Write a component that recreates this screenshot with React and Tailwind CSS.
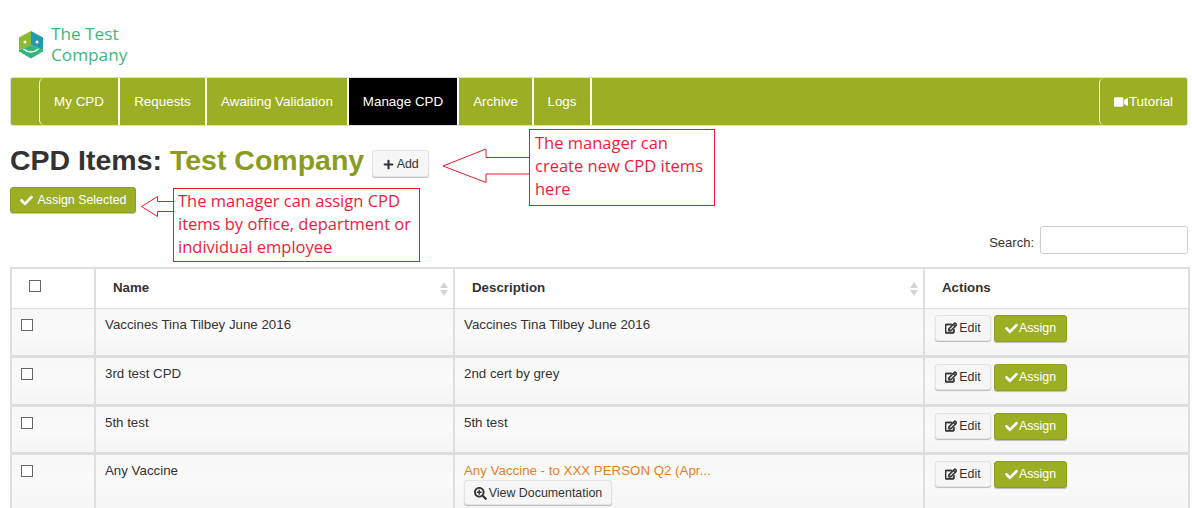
import React from "react";
import { FaCheck, FaPlus, FaRegEdit, FaSearchPlus, FaVideo } from "react-icons/fa";

const navItems = [
  { label: "My CPD", width: "w-[81px]", first: true },
  { label: "Requests", width: "w-[87px]" },
  { label: "Awaiting Validation", width: "w-[142px]" },
  { label: "Manage CPD", width: "w-[110px]", active: true },
  { label: "Archive", width: "w-[75px]" },
  { label: "Logs", width: "w-[58px]" },
];

const rows = [
  { name: "Vaccines Tina Tilbey June 2016", desc: "Vaccines Tina Tilbey June 2016", height: "h-[48px]" },
  { name: "3rd test CPD", desc: "2nd cert by grey", height: "h-[49px]" },
  { name: "5th test", desc: "5th test", height: "h-[48px]" },
  { name: "Any Vaccine", desc: "Any Vaccine - to XXX PERSON Q2 (Apr...", doc: true, height: "h-[60px]" },
];

function Logo() {
  return (
    <svg width="26" height="30" viewBox="0 0 26 30" className="shrink-0">
      <path d="M13 1 L1 7.5 V20 L13 15 Z" fill="#8dbb2e" />
      <path d="M13 1 L25 7.5 V20 L13 15 Z" fill="#2299ae" />
      <path d="M1 20 L13 15 L25 20 V21.5 L13 28.5 L1 21.5 Z" fill="#35b47b" />
      <circle cx="7" cy="12" r="1.5" fill="#fff" />
      <circle cx="19" cy="12" r="1.5" fill="#fff" />
      <path d="M5.5 19 Q13 25 20.5 19" fill="none" stroke="#fff" strokeWidth="1.6" />
    </svg>
  );
}

function SortArrows() {
  return (
    <svg width="8" height="14" viewBox="0 0 8 14" className="absolute right-[5px] top-[13px]">
      <path d="M4 0 L8 6 H0 Z" fill="#d4d4d4" />
      <path d="M4 14 L8 8 H0 Z" fill="#d4d4d4" />
    </svg>
  );
}

function Callout({ className, children }) {
  return (
    <div className={`absolute border border-[#e8192c] bg-white text-[#ed1c3c] text-[16.5px] leading-[23px] font-['Open_Sans',sans-serif] ${className}`}>
      {children}
    </div>
  );
}

function GreenButton({ children, className = "" }) {
  return (
    <button className={`flex items-center rounded-[3px] border border-[#8fa020] bg-[#9cae24] pt-[1px] text-white text-[12.4px] shadow-[0_1px_1px_rgba(0,0,0,0.25)] ${className}`}>
      {children}
    </button>
  );
}

function WhiteButton({ children, className = "" }) {
  return (
    <button className={`flex items-center rounded-[3px] border border-[#e3e3e3] bg-[#f6f6f6] pt-[1px] text-[#333] text-[12.4px] shadow-[0_1px_1px_rgba(0,0,0,0.25)] ${className}`}>
      {children}
    </button>
  );
}

export default function App() {
  return (
    <div className="relative h-[508px] w-[1192px] overflow-hidden bg-white font-['Liberation_Sans',sans-serif] text-[#333]">
      <div className="flex h-[77px] items-start gap-[7px] pl-[18px] pt-[23px]">
        <div className="pt-[7px]">
          <Logo />
        </div>
        <div className="font-['Open_Sans',sans-serif] text-[17.2px] font-medium leading-[21px] text-[#3fb67c]">
          <div>The Test</div>
          <div>Company</div>
        </div>
      </div>

      <nav className="ml-[10px] flex h-[49px] w-[1178px] rounded-[3px] border border-[#dddddd] bg-[#9cae24] text-[13.4px] text-white">
        <div className="w-[28px]" />
        {navItems.map((item) => (
          <div
            key={item.label}
            className={`flex items-center justify-center border-r-2 border-white pt-[1px] ${item.width} ${item.active ? "bg-black" : ""} ${item.first ? "rounded-l-[5px] border-l" : ""}`}
          >
            {item.label}
          </div>
        ))}
        <div className="ml-auto flex w-[88px] items-center justify-center gap-[1px] rounded-l-[5px] border-l border-white pt-[1px]">
          <FaVideo className="text-[14px]" />
          Tutorial
        </div>
      </nav>

      <div className="flex h-[60px] items-start pl-[10px] pt-[18px]">
        <h1 className="text-[28.5px] font-bold leading-[33px] text-[#333]">
          CPD Items: <span className="text-[#8a9c20]">Test Company</span>
        </h1>
        <WhiteButton className="ml-[8px] mt-[6px] h-[27px] w-[57px] justify-center gap-[3px]">
          <FaPlus className="text-[11px]" />
          Add
        </WhiteButton>
      </div>

      <GreenButton className="ml-[10px] mt-[1px] h-[26px] w-[126px] justify-center gap-[5px]">
        <FaCheck className="text-[13px]" />
        Assign Selected
      </GreenButton>

      <div className="mr-[4px] mt-[13px] flex h-[28px] items-center justify-end gap-[6px] text-[13px]">
        <span className="pt-[5px]">Search:</span>
        <input className="h-[28px] w-[148px] rounded-[3px] border border-[#ccc] bg-white" />
      </div>

      <table className="ml-[10px] mt-[13px] w-[1178px] table-fixed border-collapse text-[13.3px]">
        <colgroup>
          <col className="w-[84px]" />
          <col className="w-[359px]" />
          <col className="w-[470px]" />
          <col className="w-[265px]" />
        </colgroup>
        <thead>
          <tr className="h-[40px] text-left font-bold">
            <th className="border-2 border-b border-[#dedede] pb-[4px] pl-[17px]">
              <input type="checkbox" className="block h-[12px] w-[12px] appearance-none border border-[#666] bg-white" />
            </th>
            <th className="relative border-2 border-b border-[#dedede] pl-[17px]">
              Name
              <SortArrows />
            </th>
            <th className="relative border-2 border-b border-[#dedede] pl-[17px]">
              Description
              <SortArrows />
            </th>
            <th className="border-2 border-b border-[#dedede] pl-[17px]">Actions</th>
          </tr>
        </thead>
        <tbody>
          {rows.map((row) => (
            <tr key={row.name} className={`bg-gradient-to-b from-[#f7f7f7] via-[#fafafa] to-[#f5f5f5] ${row.height}`}>
              <td className="border-x-2 border-t border-b-[3px] border-[#dedede] pl-[9px] pt-[10px] align-top">
                <input type="checkbox" className="block h-[12px] w-[12px] appearance-none border border-[#666] bg-white" />
              </td>
              <td className="border-x-2 border-t border-b-[3px] border-[#dedede] pl-[9px] pt-[6px] align-top">{row.name}</td>
              <td className="border-x-2 border-t border-b-[3px] border-[#dedede] pl-[9px] pt-[6px] align-top">
                {row.doc ? (
                  <>
                    <div className="text-[#e67e22]">{row.desc}</div>
                    <WhiteButton className="h-[25px] w-[148px] justify-center gap-[2px]">
                      <FaSearchPlus className="text-[13px]" />
                      View Documentation
                    </WhiteButton>
                  </>
                ) : (
                  row.desc
                )}
              </td>
              <td className="border-x-2 border-t border-b-[3px] border-[#dedede] pl-[10px] pt-[6px] align-top">
                <div className="flex gap-[3px]">
                  <WhiteButton className="h-[26px] w-[56px] justify-center gap-[2px]">
                    <FaRegEdit className="stroke-current stroke-[40] text-[12px]" />
                    Edit
                  </WhiteButton>
                  <GreenButton className="h-[27px] w-[73px] justify-center gap-[1px]">
                    <FaCheck className="text-[13px]" />
                    Assign
                  </GreenButton>
                </div>
              </td>
            </tr>
          ))}
        </tbody>
      </table>

      <Callout className="left-[529px] top-[129px] h-[77px] w-[186px] pl-[5px] pt-[1px]">
        The manager can create new CPD items here
      </Callout>
      <svg width="90" height="36" viewBox="0 0 90 36" className="absolute left-[442px] top-[148px]">
        <path d="M87 9.5 H44 V1 L1 18 L44 34.5 V26 H87" fill="#fff" stroke="#e8192c" strokeWidth="1" />
      </svg>

      <Callout className="left-[173px] top-[188px] h-[74px] w-[247px] pl-[4px]">
        The manager can assign CPD items by office, department or individual employee
      </Callout>
      <svg width="34" height="22" viewBox="0 0 34 22" className="absolute left-[141px] top-[196px]">
        <path d="M32 5.5 H16.5 V0.5 L0.5 10.5 L16.5 20.5 V15.5 H32" fill="#fff" stroke="#e8192c" strokeWidth="1" />
      </svg>
    </div>
  );
}
